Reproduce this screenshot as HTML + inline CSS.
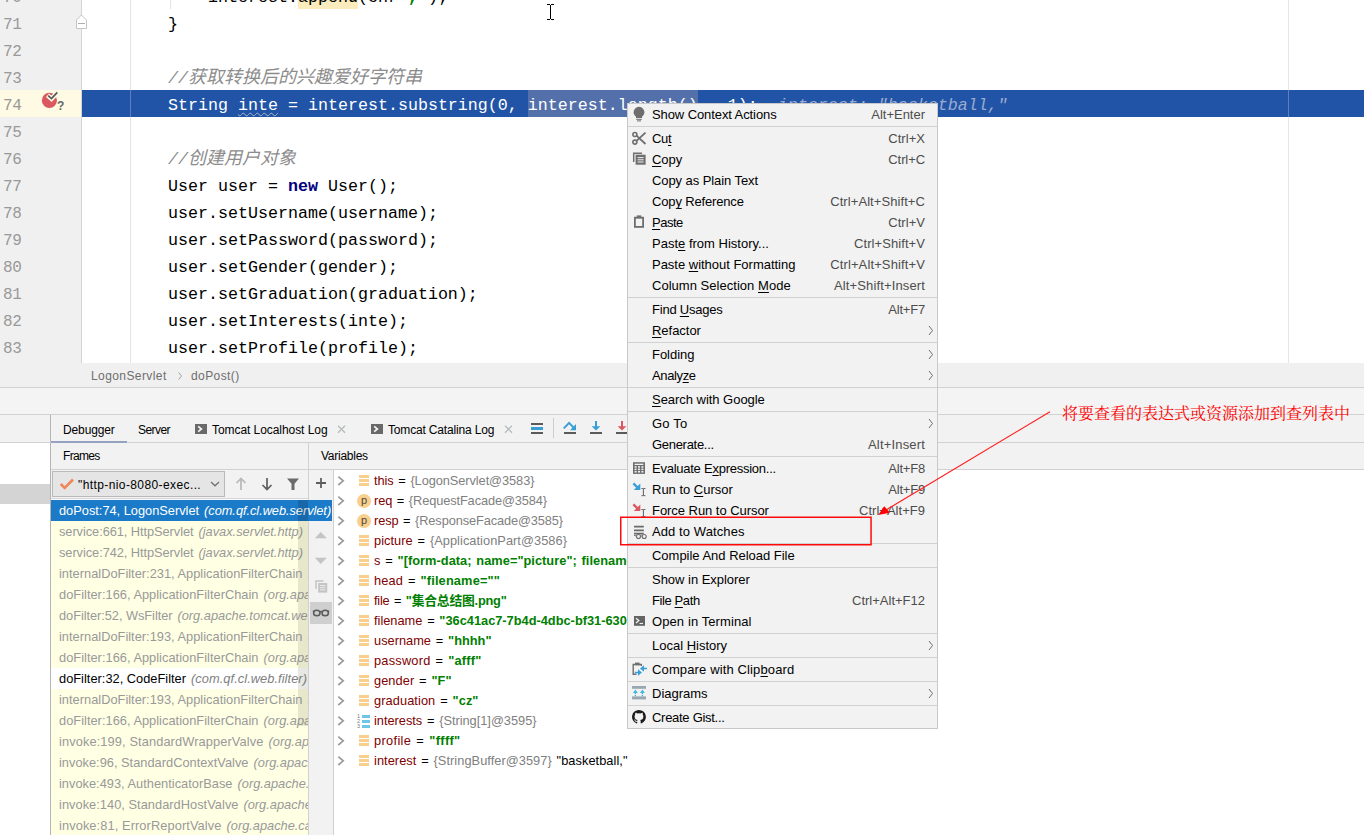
<!DOCTYPE html><html><head><meta charset="utf-8"><title>debug</title><style>
*{box-sizing:border-box;margin:0;padding:0}
html,body{width:1364px;height:835px;overflow:hidden;background:#fff}
body{position:relative;font-family:"Liberation Sans","Noto Sans CJK SC",sans-serif;font-size:12px;color:#000}
.abs{position:absolute}
.mono{font-family:"Liberation Mono","Noto Sans CJK SC",monospace;font-size:16.664px;white-space:pre}
#editor{position:absolute;left:0;top:0;width:1364px;height:363px;background:#fff;overflow:hidden}
#gutter{position:absolute;left:0;top:0;width:82px;height:363px;background:#f0f0f0;border-right:1px solid #d3d3d3}
.ln{position:absolute;left:3px;height:27px;line-height:27px;color:#999;padding-top:3px;font-size:16px !important;letter-spacing:-.45px}
.cl{position:absolute;left:168px;height:27px;line-height:27px;color:#000;padding-top:2px}
.cm{color:#8c8c8c;font-style:italic}
.cm .cj{line-height:0;font-size:18px;font-family:"Liberation Mono","Noto Sans CJK SC",monospace}
.kw{color:#000080;font-weight:bold}
.vline{position:absolute;width:1px}
.hline{position:absolute;height:1px}
.ui{position:absolute;white-space:nowrap;line-height:16px;height:16px}
/* menu */
#menu{position:absolute;left:627px;top:103px;width:311px;height:626px;background:#f2f2f2;border:1px solid #c9c9c9;font-size:13px}
.mi{position:relative;height:21px;line-height:22px;white-space:nowrap}
.mi .t{position:absolute;left:24px;top:0;color:#000}
.mi .k{position:absolute;right:12px;top:0;color:#4d4d4d}
.mi .ar{position:absolute;right:3px;top:5px}
.mi svg.ic{position:absolute;left:4px;top:2px}
.ms{height:3px;padding-top:1px}
.ms i{display:block;height:1px;background:#d1d1d1}
u{text-decoration:underline;text-underline-offset:1.5px;text-decoration-thickness:1px}
/* frames */
.fr{font-size:12.8px;position:absolute;left:51px;width:257px;height:21px;line-height:20px;padding-top:1px;white-space:nowrap;overflow:hidden;padding-left:8px;color:#999;background:#ffffe4}
.fr i{color:#999}
.vr{font-size:12.8px;word-spacing:1.2px;position:absolute;left:374px;height:20px;line-height:20px;white-space:nowrap}
.vn{color:#800000}
.vg{color:#808080}
.vs{color:#008000;font-weight:bold}
</style></head><body>
<div id="editor">
<div id="gutter"></div>
<div class="abs" style="left:0;top:90px;width:81px;height:27px;background:#fffae3"></div>
<div class="abs" style="left:82px;top:90px;width:1282px;height:27px;background:#2154a6"></div>
<div class="abs" style="left:528px;top:90px;width:170px;height:27px;background:#5470aa"></div>
<div class="vline" style="left:130px;top:0;height:363px;background:#e4e4e4"></div>
<div class="vline" style="left:130px;top:90px;height:27px;background:#5f7fbc"></div>
<div class="vline" style="left:170px;top:0;height:9px;background:#e4e4e4"></div>
<div class="vline" style="left:1288px;top:0;height:363px;background:#e6e6e6"></div>
<div class="vline" style="left:1288px;top:90px;height:27px;background:#5f7fbc"></div>
<div class="abs" style="left:298px;top:-18px;width:60px;height:26.500px;background:#fbecbe"></div>
<div class="ln mono" style="top:-18px">70</div>
<div class="cl mono" style="top:-18px">    interest.append(chr<span style="color:#008000;font-weight:bold">","</span>);</div>
<div class="ln mono" style="top:9px">71</div>
<div class="cl mono" style="top:9px">}</div>
<div class="ln mono" style="top:36px">72</div>
<div class="ln mono" style="top:63px">73</div>
<div class="cl mono" style="top:63px"><span class="cm">//<span class="cj">获取转换后的兴趣爱好字符串</span></span></div>
<div class="ln mono" style="top:90px">74</div>
<div class="cl mono" style="top:90px"><span style="color:#fff">String <span style="text-decoration:underline wavy #a9b7c6 1px;text-underline-offset:1.500px">inte</span> = interest.substring(0, interest.length() - 1);</span><span style="color:#9aabd0;font-style:italic">  interest: "basketball,"</span></div>
<div class="ln mono" style="top:117px">75</div>
<div class="ln mono" style="top:144px">76</div>
<div class="cl mono" style="top:144px"><span class="cm">//<span class="cj">创建用户对象</span></span></div>
<div class="ln mono" style="top:171px">77</div>
<div class="cl mono" style="top:171px">User user = <span class="kw">new</span> User();</div>
<div class="ln mono" style="top:198px">78</div>
<div class="cl mono" style="top:198px">user.setUsername(username);</div>
<div class="ln mono" style="top:225px">79</div>
<div class="cl mono" style="top:225px">user.setPassword(password);</div>
<div class="ln mono" style="top:252px">80</div>
<div class="cl mono" style="top:252px">user.setGender(gender);</div>
<div class="ln mono" style="top:279px">81</div>
<div class="cl mono" style="top:279px">user.setGraduation(graduation);</div>
<div class="ln mono" style="top:306px">82</div>
<div class="cl mono" style="top:306px">user.setInterests(inte);</div>
<div class="ln mono" style="top:333px">83</div>
<div class="cl mono" style="top:333px">user.setProfile(profile);</div>
<svg class="abs" style="left:75px;top:14px" width="13" height="16" viewBox="0 0 13 16"><path d="M1.5 14.5V6L6.5 1l5 5v8.5z" fill="#fff" stroke="#c4c4c4"/><path d="M3 9.500h7" stroke="#b0b0b0"/></svg>
<svg class="abs" style="left:40px;top:90px" width="26" height="24" viewBox="0 0 26 24"><circle cx="9.4" cy="10.4" r="7.6" fill="#db5860"/><path d="M7.5 5.2l4 3.6 6.2-6.6" fill="none" stroke="#fffae3" stroke-width="4.6"/><path d="M8.2 5.6l3.3 3 5.8-6.2" fill="none" stroke="#55585e" stroke-width="1.7"/><text x="16.900" y="20.300" font-family="Liberation Sans" font-weight="bold" font-size="12" fill="#666">?</text></svg>
<svg class="abs" style="left:546px;top:3px" width="10" height="18" viewBox="546 3 10 18" shape-rendering="crispEdges"><path d="M547 4h3v1h-3zM551 4h3v1h-3zM550 5h1v14h-1zM547 19h3v1h-3zM551 19h3v1h-3z" fill="#000"/></svg>
</div>
<div class="abs" style="left:0;top:363px;width:1364px;height:25px;background:#f0f0f0"></div><div class="abs" style="left:0;top:388px;width:1364px;height:27px;background:#f4f4f4"></div>
<div class="hline" style="left:0;top:387px;width:1364px;background:#d1d1d1"></div>
<div class="hline" style="left:0;top:414px;width:1364px;background:#d1d1d1"></div>
<div class="ui" style="left:91px;top:368px;color:#6e6e6e"><span style="letter-spacing:0.415px">LogonServlet</span></div>
<svg class="abs" style="left:177px;top:371px" width="6" height="10" viewBox="0 0 6 10"><path d="M1.5 1.5l3 3.500-3 3.500" fill="none" stroke="#a0a0a0" stroke-width="1"/></svg>
<div class="ui" style="left:191px;top:368px;color:#6e6e6e"><span style="letter-spacing:0.418px">doPost()</span></div>
<div class="abs" style="left:0;top:415px;width:1364px;height:55px;background:#f2f2f2"></div>
<div class="abs" style="left:0;top:442px;width:50px;height:393px;background:#fff"></div>
<div class="abs" style="left:0;top:484px;width:50px;height:20px;background:#d4d4d4"></div>
<div class="vline" style="left:50px;top:415px;height:420px;background:#b4b4b4"></div>
<div class="hline" style="left:0;top:442px;width:1364px;background:#d1d1d1"></div>
<div class="hline" style="left:51px;top:469px;width:1313px;background:#d1d1d1"></div>
<div class="ui" style="left:63px;top:421.600px"><span style="letter-spacing:-0.127px">Debugger</span></div>
<div class="abs" style="left:51px;top:440.500px;width:76px;height:2.500px;background:#95a3c0"></div>
<div class="ui" style="left:138px;top:421.600px"><span style="letter-spacing:-0.574px">Server</span></div>
<svg class="abs" style="left:195px;top:424px" width="12" height="10" viewBox="0 0 12 10"><rect width="12" height="10" fill="#696969"/><path d="M3.200 2.300L6.400 5 3.200 7.700" fill="none" stroke="#f5f5f5" stroke-width="1.700"/></svg>
<div class="ui" style="left:212px;top:421.600px"><span style="letter-spacing:-0.062px">Tomcat Localhost Log</span></div>
<svg class="abs" style="left:337px;top:425px" width="9" height="9" viewBox="0 0 9 9"><path d="M1 .700l7 7M8 .700l-7 7" stroke="#b4babc" stroke-width="1.250"/></svg>
<svg class="abs" style="left:371px;top:424px" width="12" height="10" viewBox="0 0 12 10"><rect width="12" height="10" fill="#696969"/><path d="M3.200 2.300L6.400 5 3.200 7.700" fill="none" stroke="#f5f5f5" stroke-width="1.700"/></svg>
<div class="ui" style="left:388px;top:421.600px"><span style="letter-spacing:-0.169px">Tomcat Catalina Log</span></div>
<svg class="abs" style="left:504px;top:425px" width="9" height="9" viewBox="0 0 9 9"><path d="M1 .700l7 7M8 .700l-7 7" stroke="#b4babc" stroke-width="1.250"/></svg>
<svg class="abs" style="left:531px;top:423px" width="12" height="11" viewBox="0 0 12 11" shape-rendering="crispEdges"><path d="M0 0h12v2H0zM0 9h12v2H0z" fill="#5a5a5a"/><path d="M0 4h12v3H0z" fill="#389fd6"/></svg>
<div class="vline" style="left:553px;top:418px;height:20px;background:#cdcdcd"></div>
<svg class="abs" style="left:562px;top:421px" width="16" height="16" viewBox="0 0 16 16"><path d="M1.800 7.400L7.100 1.900l4.500 4.700" fill="none" stroke="#389fd6" stroke-width="2"/><path d="M14 3v6.200H8z" fill="#389fd6"/><path d="M2 11h12v2H2z" fill="#5a5a5a" shape-rendering="crispEdges"/></svg>
<svg class="abs" style="left:588px;top:421px" width="16" height="16" viewBox="0 0 16 16"><path d="M8 0v6" stroke="#389fd6" stroke-width="2"/><path d="M3.600 5.200h8.800L8 9.500z" fill="#389fd6"/><path d="M2 11h12v2H2z" fill="#5a5a5a" shape-rendering="crispEdges"/></svg>
<svg class="abs" style="left:614px;top:421px" width="16" height="16" viewBox="0 0 16 16"><path d="M8 0v6" stroke="#db5860" stroke-width="2"/><path d="M3.600 5.200h8.800L8 9.500z" fill="#db5860"/><path d="M2 11h12v2H2z" fill="#5a5a5a" shape-rendering="crispEdges"/></svg>
<div class="ui" style="left:63px;top:448px"><span style="letter-spacing:-0.662px">Frames</span></div>
<div class="ui" style="left:321px;top:448px"><span style="letter-spacing:-0.260px">Variables</span></div>
<div class="vline" style="left:308px;top:443px;height:392px;background:#d1d1d1"></div>
<div class="abs" style="left:51px;top:470px;width:257px;height:30px;background:#f2f2f2"></div>
<div class="hline" style="left:51px;top:498px;width:257px;background:#d6d6d6"></div><div class="hline" style="left:51px;top:499px;width:257px;background:#fafafa"></div>
<div class="abs" style="left:52px;top:471px;width:173px;height:26px;background:#e5e5e5;border:1px solid #b9b9b9"></div>
<svg class="abs" style="left:59px;top:477px" width="16" height="14" viewBox="0 0 16 14"><path d="M1.700 7l4 4L14 2.500" fill="none" stroke="#f0875a" stroke-width="2.600"/></svg>
<div class="ui" style="left:78px;top:477px"><span style="letter-spacing:0.399px">"http-nio-8080-exec...</span></div>
<svg class="abs" style="left:209px;top:480px" width="12" height="8" viewBox="0 0 12 8"><path d="M2 2L6 5.800 10 2" fill="none" stroke="#6e6e6e" stroke-width="1.200"/></svg>
<svg class="abs" style="left:234px;top:476px" width="14" height="16" viewBox="0 0 14 16"><path d="M7 14V2.500M2.500 7L7 2.500 11.500 7" fill="none" stroke="#b8b8b8" stroke-width="1.700"/></svg>
<svg class="abs" style="left:260px;top:476px" width="14" height="16" viewBox="0 0 14 16"><path d="M7 2v11.300M2.500 9L7 13.500 11.500 9" fill="none" stroke="#606060" stroke-width="1.700"/></svg>
<svg class="abs" style="left:286px;top:477px" width="14" height="14" viewBox="0 0 14 14"><path d="M1 1.500h12L8.500 6.800V13h-3V6.800z" fill="#6a6a6a"/></svg>
<div class="fr" style="top:500px;width:281px;background:#1b7bc8;color:#fff;z-index:3"><span style="letter-spacing:-0.002px">doPost:74, LogonServlet</span><i style="color:#fff;margin-left:5px"><span style="letter-spacing:-0.044px">(com.qf.cl.web.servlet)</span></i></div>
<div class="fr" style="top:521px;"><span style="letter-spacing:-0.057px">service:661, HttpServlet</span><i style="margin-left:5px"><span style="letter-spacing:-0.002px">(javax.servlet.http)</span></i></div>
<div class="fr" style="top:542px;"><span style="letter-spacing:-0.057px">service:742, HttpServlet</span><i style="margin-left:5px"><span style="letter-spacing:-0.002px">(javax.servlet.http)</span></i></div>
<div class="fr" style="top:563px;"><span style="letter-spacing:0.021px">internalDoFilter:231, ApplicationFilterChain</span><i style="margin-left:5px"><span style="letter-spacing:0px">(org.apache.catalina.core)</span></i></div>
<div class="fr" style="top:584px;"><span style="letter-spacing:0.029px">doFilter:166, ApplicationFilterChain</span><i style="margin-left:5px"><span style="letter-spacing:0px">(org.apache.catalina.core)</span></i></div>
<div class="fr" style="top:605px;"><span style="letter-spacing:-0.048px">doFilter:52, WsFilter</span><i style="margin-left:5px"><span style="letter-spacing:0px">(org.apache.tomcat.websocket.server)</span></i></div>
<div class="fr" style="top:626px;"><span style="letter-spacing:0.021px">internalDoFilter:193, ApplicationFilterChain</span><i style="margin-left:5px"><span style="letter-spacing:0px">(org.apache.catalina.core)</span></i></div>
<div class="fr" style="top:647px;"><span style="letter-spacing:0.029px">doFilter:166, ApplicationFilterChain</span><i style="margin-left:5px"><span style="letter-spacing:0px">(org.apache.catalina.core)</span></i></div>
<div class="fr" style="top:668px;background:#fff;color:#000"><span style="letter-spacing:0.017px">doFilter:32, CodeFilter</span><i style="color:#808080;margin-left:5px"><span style="letter-spacing:0.068px">(com.qf.cl.web.filter)</span></i></div>
<div class="fr" style="top:689px;"><span style="letter-spacing:0.021px">internalDoFilter:193, ApplicationFilterChain</span><i style="margin-left:5px"><span style="letter-spacing:0px">(org.apache.catalina.core)</span></i></div>
<div class="fr" style="top:710px;"><span style="letter-spacing:0.029px">doFilter:166, ApplicationFilterChain</span><i style="margin-left:5px"><span style="letter-spacing:0px">(org.apache.catalina.core)</span></i></div>
<div class="fr" style="top:731px;"><span style="letter-spacing:0.114px">invoke:199, StandardWrapperValve</span><i style="margin-left:5px"><span style="letter-spacing:0px">(org.apache.catalina.core)</span></i></div>
<div class="fr" style="top:752px;"><span style="letter-spacing:0.016px">invoke:96, StandardContextValve</span><i style="margin-left:5px"><span style="letter-spacing:0px">(org.apache.catalina.core)</span></i></div>
<div class="fr" style="top:773px;"><span style="letter-spacing:0.021px">invoke:493, AuthenticatorBase</span><i style="margin-left:5px"><span style="letter-spacing:0px">(org.apache.catalina.authenticator)</span></i></div>
<div class="fr" style="top:794px;"><span style="letter-spacing:0.040px">invoke:140, StandardHostValve</span><i style="margin-left:5px"><span style="letter-spacing:0px">(org.apache.catalina.core)</span></i></div>
<div class="fr" style="top:815px;"><span style="letter-spacing:0.100px">invoke:81, ErrorReportValve</span><i style="margin-left:5px"><span style="letter-spacing:0px">(org.apache.catalina.valves)</span></i></div>
<div class="abs" style="left:298px;top:521px;width:10px;height:205px;background:rgba(110,110,90,.17);z-index:4"></div>
<div class="abs" style="left:298px;top:500px;width:10px;height:21px;background:rgba(0,0,0,.15);z-index:4"></div>
<div class="abs" style="left:309px;top:470px;width:24px;height:365px;background:#f2f2f2"></div>
<div class="vline" style="left:333px;top:470px;height:365px;background:#d1d1d1"></div>
<svg class="abs" style="left:314px;top:476px" width="14" height="14" viewBox="0 0 14 14"><path d="M7 2v10M2 7h10" stroke="#5e5e5e" stroke-width="1.800"/></svg>
<svg class="abs" style="left:314px;top:531px" width="14" height="8" viewBox="0 0 14 8"><path d="M.800 7.200L6.800 1l6 6.200z" fill="#c4c4c4"/></svg>
<svg class="abs" style="left:314px;top:557px" width="14" height="8" viewBox="0 0 14 8"><path d="M.800 .800L6.800 7l6-6.200z" fill="#c4c4c4"/></svg>
<svg class="abs" style="left:314px;top:579px" width="14" height="14" viewBox="0 0 14 14"><path d="M2 10V2h7.500" fill="none" stroke="#c4c4c4" stroke-width="1.500"/><rect x="4.200" y="4" width="9" height="9.600" fill="#c4c4c4"/><path d="M6 6.500h5.400M6 8.700h5.400M6 10.900h5.400" stroke="#f2f2f2" stroke-width=".9"/></svg>
<div class="abs" style="left:310px;top:602px;width:22px;height:22px;background:#cfcfcf"></div>
<svg class="abs" style="left:312px;top:605.300px" width="18" height="14" viewBox="0 0 18 14"><ellipse cx="4.800" cy="8" rx="3.200" ry="2.800" fill="none" stroke="#5a5a5a" stroke-width="1.500"/><ellipse cx="13.200" cy="8" rx="3.200" ry="2.800" fill="none" stroke="#5a5a5a" stroke-width="1.500"/><path d="M7.500 7q1.500-1 3 0M1.500 7V5.500M16.500 7V5.500" fill="none" stroke="#5a5a5a" stroke-width="1.300"/></svg>
<svg class="abs" style="left:337px;top:475px" width="8" height="12" viewBox="0 0 8 12"><path d="M1.300 1.700L6.200 5.800 1.300 10" fill="none" stroke="#9b9b9b" stroke-width="1.700"/></svg>
<svg class="abs" style="left:359px;top:475px" width="10" height="11" viewBox="0 0 10 11" shape-rendering="crispEdges"><path d="M0 0h10v3H0zM0 4h10v3H0zM0 8h10v3H0z" fill="#f8cf8c"/></svg>
<div class="vr" style="top:471px"><span style="letter-spacing:-0.074px"><span class="vn">this</span> = <span class="vg">{LogonServlet@3583}</span></span></div>
<svg class="abs" style="left:337px;top:495px" width="8" height="12" viewBox="0 0 8 12"><path d="M1.300 1.700L6.200 5.800 1.300 10" fill="none" stroke="#9b9b9b" stroke-width="1.700"/></svg>
<svg class="abs" style="left:357px;top:494px" width="14" height="14" viewBox="0 0 14 14"><circle cx="7" cy="7" r="7" fill="#f8cf8c"/><text x="7" y="10" text-anchor="middle" font-family="Liberation Sans" font-size="11" fill="#50483a">p</text></svg>
<div class="vr" style="top:491px"><span style="letter-spacing:-0.109px"><span class="vn">req</span> = <span class="vg">{RequestFacade@3584}</span></span></div>
<svg class="abs" style="left:337px;top:515px" width="8" height="12" viewBox="0 0 8 12"><path d="M1.300 1.700L6.200 5.800 1.300 10" fill="none" stroke="#9b9b9b" stroke-width="1.700"/></svg>
<svg class="abs" style="left:357px;top:514px" width="14" height="14" viewBox="0 0 14 14"><circle cx="7" cy="7" r="7" fill="#f8cf8c"/><text x="7" y="10" text-anchor="middle" font-family="Liberation Sans" font-size="11" fill="#50483a">p</text></svg>
<div class="vr" style="top:511px"><span style="letter-spacing:-0.115px"><span class="vn">resp</span> = <span class="vg">{ResponseFacade@3585}</span></span></div>
<svg class="abs" style="left:337px;top:535px" width="8" height="12" viewBox="0 0 8 12"><path d="M1.300 1.700L6.200 5.800 1.300 10" fill="none" stroke="#9b9b9b" stroke-width="1.700"/></svg>
<svg class="abs" style="left:359px;top:535px" width="10" height="11" viewBox="0 0 10 11" shape-rendering="crispEdges"><path d="M0 0h10v3H0zM0 4h10v3H0zM0 8h10v3H0z" fill="#f8cf8c"/></svg>
<div class="vr" style="top:531px"><span style="letter-spacing:0.047px"><span class="vn">picture</span> = <span class="vg">{ApplicationPart@3586}</span></span></div>
<svg class="abs" style="left:337px;top:555px" width="8" height="12" viewBox="0 0 8 12"><path d="M1.300 1.700L6.200 5.800 1.300 10" fill="none" stroke="#9b9b9b" stroke-width="1.700"/></svg>
<svg class="abs" style="left:359px;top:555px" width="10" height="11" viewBox="0 0 10 11" shape-rendering="crispEdges"><path d="M0 0h10v3H0zM0 4h10v3H0zM0 8h10v3H0z" fill="#f8cf8c"/></svg>
<div class="vr" style="top:551px"><span style="letter-spacing:0.033px"><span class="vn">s</span> = <span class="vs">"[form-data; name="picture"; filename="集合总结图.png"]"</span></span></div>
<svg class="abs" style="left:337px;top:575px" width="8" height="12" viewBox="0 0 8 12"><path d="M1.300 1.700L6.200 5.800 1.300 10" fill="none" stroke="#9b9b9b" stroke-width="1.700"/></svg>
<svg class="abs" style="left:359px;top:575px" width="10" height="11" viewBox="0 0 10 11" shape-rendering="crispEdges"><path d="M0 0h10v3H0zM0 4h10v3H0zM0 8h10v3H0z" fill="#f8cf8c"/></svg>
<div class="vr" style="top:571px"><span style="letter-spacing:0.155px"><span class="vn">head</span> = <span class="vs">"filename=""</span></span></div>
<svg class="abs" style="left:337px;top:595px" width="8" height="12" viewBox="0 0 8 12"><path d="M1.300 1.700L6.200 5.800 1.300 10" fill="none" stroke="#9b9b9b" stroke-width="1.700"/></svg>
<svg class="abs" style="left:359px;top:595px" width="10" height="11" viewBox="0 0 10 11" shape-rendering="crispEdges"><path d="M0 0h10v3H0zM0 4h10v3H0zM0 8h10v3H0z" fill="#f8cf8c"/></svg>
<div class="vr" style="top:591px"><span style="letter-spacing:-0.220px"><span class="vn">file</span> = <span class="vs">"集合总结图.png"</span></span></div>
<svg class="abs" style="left:337px;top:615px" width="8" height="12" viewBox="0 0 8 12"><path d="M1.300 1.700L6.200 5.800 1.300 10" fill="none" stroke="#9b9b9b" stroke-width="1.700"/></svg>
<svg class="abs" style="left:359px;top:615px" width="10" height="11" viewBox="0 0 10 11" shape-rendering="crispEdges"><path d="M0 0h10v3H0zM0 4h10v3H0zM0 8h10v3H0z" fill="#f8cf8c"/></svg>
<div class="vr" style="top:611px"><span style="letter-spacing:-0.000px"><span class="vn">filename</span> = <span class="vs">"36c41ac7-7b4d-4dbc-bf31-6301e2a5c7d1.png"</span></span></div>
<svg class="abs" style="left:337px;top:635px" width="8" height="12" viewBox="0 0 8 12"><path d="M1.300 1.700L6.200 5.800 1.300 10" fill="none" stroke="#9b9b9b" stroke-width="1.700"/></svg>
<svg class="abs" style="left:359px;top:635px" width="10" height="11" viewBox="0 0 10 11" shape-rendering="crispEdges"><path d="M0 0h10v3H0zM0 4h10v3H0zM0 8h10v3H0z" fill="#f8cf8c"/></svg>
<div class="vr" style="top:631px"><span style="letter-spacing:0.012px"><span class="vn">username</span> = <span class="vs">"hhhh"</span></span></div>
<svg class="abs" style="left:337px;top:655px" width="8" height="12" viewBox="0 0 8 12"><path d="M1.300 1.700L6.200 5.800 1.300 10" fill="none" stroke="#9b9b9b" stroke-width="1.700"/></svg>
<svg class="abs" style="left:359px;top:655px" width="10" height="11" viewBox="0 0 10 11" shape-rendering="crispEdges"><path d="M0 0h10v3H0zM0 4h10v3H0zM0 8h10v3H0z" fill="#f8cf8c"/></svg>
<div class="vr" style="top:651px"><span style="letter-spacing:0.217px"><span class="vn">password</span> = <span class="vs">"afff"</span></span></div>
<svg class="abs" style="left:337px;top:675px" width="8" height="12" viewBox="0 0 8 12"><path d="M1.300 1.700L6.200 5.800 1.300 10" fill="none" stroke="#9b9b9b" stroke-width="1.700"/></svg>
<svg class="abs" style="left:359px;top:675px" width="10" height="11" viewBox="0 0 10 11" shape-rendering="crispEdges"><path d="M0 0h10v3H0zM0 4h10v3H0zM0 8h10v3H0z" fill="#f8cf8c"/></svg>
<div class="vr" style="top:671px"><span style="letter-spacing:0.059px"><span class="vn">gender</span> = <span class="vs">"F"</span></span></div>
<svg class="abs" style="left:337px;top:695px" width="8" height="12" viewBox="0 0 8 12"><path d="M1.300 1.700L6.200 5.800 1.300 10" fill="none" stroke="#9b9b9b" stroke-width="1.700"/></svg>
<svg class="abs" style="left:359px;top:695px" width="10" height="11" viewBox="0 0 10 11" shape-rendering="crispEdges"><path d="M0 0h10v3H0zM0 4h10v3H0zM0 8h10v3H0z" fill="#f8cf8c"/></svg>
<div class="vr" style="top:691px"><span style="letter-spacing:0.081px"><span class="vn">graduation</span> = <span class="vs">"cz"</span></span></div>
<svg class="abs" style="left:337px;top:715px" width="8" height="12" viewBox="0 0 8 12"><path d="M1.300 1.700L6.200 5.800 1.300 10" fill="none" stroke="#9b9b9b" stroke-width="1.700"/></svg>
<svg class="abs" style="left:356px;top:714px" width="15" height="15" viewBox="0 0 15 15"><path d="M6 1h8v3H6zM6 6h8v3H6zM6 11h8v3H6z" fill="#6ec6e6" shape-rendering="crispEdges"/><g font-family="Liberation Sans" font-size="5.500" fill="#777"><text x="1" y="4.300">1</text><text x="1" y="9.300">2</text><text x="1" y="14.300">3</text></g></svg>
<div class="vr" style="top:711px"><span style="letter-spacing:-0.019px"><span class="vn">interests</span> = <span class="vg">{String[1]@3595}</span></span></div>
<svg class="abs" style="left:337px;top:735px" width="8" height="12" viewBox="0 0 8 12"><path d="M1.300 1.700L6.200 5.800 1.300 10" fill="none" stroke="#9b9b9b" stroke-width="1.700"/></svg>
<svg class="abs" style="left:359px;top:735px" width="10" height="11" viewBox="0 0 10 11" shape-rendering="crispEdges"><path d="M0 0h10v3H0zM0 4h10v3H0zM0 8h10v3H0z" fill="#f8cf8c"/></svg>
<div class="vr" style="top:731px"><span style="letter-spacing:0.342px"><span class="vn">profile</span> = <span class="vs">"ffff"</span></span></div>
<svg class="abs" style="left:337px;top:755px" width="8" height="12" viewBox="0 0 8 12"><path d="M1.300 1.700L6.200 5.800 1.300 10" fill="none" stroke="#9b9b9b" stroke-width="1.700"/></svg>
<svg class="abs" style="left:359px;top:755px" width="10" height="11" viewBox="0 0 10 11" shape-rendering="crispEdges"><path d="M0 0h10v3H0zM0 4h10v3H0zM0 8h10v3H0z" fill="#f8cf8c"/></svg>
<div class="vr" style="top:751px"><span style="letter-spacing:0.049px"><span class="vn">interest</span> = <span class="vg">{StringBuffer@3597}</span> "basketball,"</span></div>
<div id="menu">
<div class="mi"><svg class="ic" width="16" height="16" viewBox="0 0 16 16"><path d="M4 12V10.700A5.400 5.400 0 1 1 10 10.700V12z" fill="#6e6e6e"/><path d="M4.200 13.300h5.600M5 14.900h4" stroke="#6e6e6e" stroke-width="1"/></svg><span class="t"><span style="letter-spacing:-0.093px">Show Context Actions</span></span><span class="k"><span style="letter-spacing:-0.016px">Alt+Enter</span></span></div>
<div class="ms"><i></i></div>
<div class="mi"><svg class="ic" width="16" height="16" viewBox="0 0 16 16"><circle cx="2.900" cy="4.500" r="2" fill="none" stroke="#6e6e6e" stroke-width="1.600"/><circle cx="2.900" cy="12.100" r="2" fill="none" stroke="#6e6e6e" stroke-width="1.600"/><path d="M4.500 5.700L13.500 14M4.500 10.900L13.500 2.600" stroke="#6e6e6e" stroke-width="1.800"/></svg><span class="t"><span style="letter-spacing:-0.317px">Cu<u>t</u></span></span><span class="k"><span style="letter-spacing:0.036px">Ctrl+X</span></span></div>
<div class="mi"><svg class="ic" width="16" height="16" viewBox="0 0 16 16"><path d="M1.700 11V2.200H10" fill="none" stroke="#6e6e6e" stroke-width="1.500"/><rect x="3.600" y="3.700" width="10" height="10" fill="#6e6e6e"/><path d="M5.600 6.600h6M5.600 8.800h6M5.600 11h6" stroke="#f2f2f2" stroke-width="1"/></svg><span class="t"><span style="letter-spacing:-0.065px"><u>C</u>opy</span></span><span class="k"><span style="letter-spacing:-0.084px">Ctrl+C</span></span></div>
<div class="mi"><span class="t"><span style="letter-spacing:-0.080px">Copy as Plain Text</span></span></div>
<div class="mi"><span class="t"><span style="letter-spacing:-0.161px">Cop<u>y</u> Reference</span></span><span class="k"><span style="letter-spacing:0.076px">Ctrl+Alt+Shift+C</span></span></div>
<div class="mi"><svg class="ic" width="16" height="16" viewBox="0 0 16 16"><rect x="2.900" y="3.700" width="8.200" height="9.200" fill="none" stroke="#6e6e6e" stroke-width="1.800"/><rect x="4.700" y="1.400" width="4.600" height="2.800" fill="#6e6e6e"/></svg><span class="t"><span style="letter-spacing:-0.510px"><u>P</u>aste</span></span><span class="k"><span style="letter-spacing:0.036px">Ctrl+V</span></span></div>
<div class="mi"><span class="t"><span style="letter-spacing:0.005px">Past<u>e</u> from History...</span></span><span class="k"><span style="letter-spacing:0.076px">Ctrl+Shift+V</span></span></div>
<div class="mi"><span class="t"><span style="letter-spacing:-0.017px">Paste <u>w</u>ithout Formatting</span></span><span class="k"><span style="letter-spacing:0.121px">Ctrl+Alt+Shift+V</span></span></div>
<div class="mi"><span class="t"><span style="letter-spacing:0.031px">Column Selection <u>M</u>ode</span></span><span class="k"><span style="letter-spacing:0.132px">Alt+Shift+Insert</span></span></div>
<div class="ms"><i></i></div>
<div class="mi"><span class="t"><span style="letter-spacing:-0.218px">Find <u>U</u>sages</span></span><span class="k"><span style="letter-spacing:-0.206px">Alt+F7</span></span></div>
<div class="mi"><span class="t"><span style="letter-spacing:-0.030px"><u>R</u>efactor</span></span><svg class="ar" width="6" height="11" viewBox="0 0 6 11"><path d="M1 1l3.500 4.500L1 10" fill="none" stroke="#6e6e6e" stroke-width="1"/></svg></div>
<div class="ms"><i></i></div>
<div class="mi"><span class="t"><span style="letter-spacing:-0.034px">Folding</span></span><svg class="ar" width="6" height="11" viewBox="0 0 6 11"><path d="M1 1l3.500 4.500L1 10" fill="none" stroke="#6e6e6e" stroke-width="1"/></svg></div>
<div class="mi"><span class="t"><span style="letter-spacing:-0.381px">Analy<u>z</u>e</span></span><svg class="ar" width="6" height="11" viewBox="0 0 6 11"><path d="M1 1l3.500 4.500L1 10" fill="none" stroke="#6e6e6e" stroke-width="1"/></svg></div>
<div class="ms"><i></i></div>
<div class="mi"><span class="t"><span style="letter-spacing:-0.036px"><u>S</u>earch with Google</span></span></div>
<div class="ms"><i></i></div>
<div class="mi"><span class="t"><span style="letter-spacing:0.189px">Go To</span></span><svg class="ar" width="6" height="11" viewBox="0 0 6 11"><path d="M1 1l3.500 4.500L1 10" fill="none" stroke="#6e6e6e" stroke-width="1"/></svg></div>
<div class="mi"><span class="t"><span style="letter-spacing:-0.295px">Generate...</span></span><span class="k"><span style="letter-spacing:0.172px">Alt+Insert</span></span></div>
<div class="ms"><i></i></div>
<div class="mi"><svg class="ic" width="16" height="16" viewBox="0 0 16 16"><rect x="1" y="2.200" width="12" height="11.700" fill="#6e6e6e"/><g fill="#f2f2f2"><rect x="2.600" y="6.200" width="2" height="1.500"/><rect x="6" y="6.200" width="2" height="1.500"/><rect x="9.400" y="6.200" width="2" height="1.500"/><rect x="2.600" y="8.600" width="2" height="1.500"/><rect x="6" y="8.600" width="2" height="1.500"/><rect x="9.400" y="8.600" width="2" height="1.500"/><rect x="2.600" y="11" width="2" height="1.500"/><rect x="6" y="11" width="2" height="1.500"/><rect x="9.400" y="11" width="2" height="1.500"/><rect x="2.600" y="3.700" width="8.800" height="1.300"/></g></svg><span class="t"><span style="letter-spacing:-0.248px">Evaluate E<u>x</u>pression...</span></span><span class="k"><span style="letter-spacing:-0.206px">Alt+F8</span></span></div>
<div class="mi"><svg class="ic" width="17" height="17" viewBox="0 0 17 17"><path d="M1.400 2.300L6 7" stroke="#389fd6" stroke-width="2.400"/><path d="M8.300 2.600V9.100H1.800z" fill="#389fd6"/><path d="M9.400 7.500h1.300q.7 0 .7.700v5.800q0 .7-.7.700H9.400M13.400 7.500h-1.300q-.7 0-.7.700M13.400 14.700h-1.300q-.7 0-.7-.7" fill="none" stroke="#4d4d4d" stroke-width=".9"/></svg><span class="t"><span style="letter-spacing:-0.011px">Run to <u>C</u>ursor</span></span><span class="k"><span style="letter-spacing:-0.206px">Alt+F9</span></span></div>
<div class="mi"><svg class="ic" width="17" height="17" viewBox="0 0 17 17"><path d="M1.400 2.300L6 7" stroke="#db5860" stroke-width="2.400"/><path d="M8.300 2.600V9.100H1.800z" fill="#db5860"/><path d="M9.400 7.500h1.300q.7 0 .7.700v5.800q0 .7-.7.700H9.400M13.400 7.500h-1.300q-.7 0-.7.700M13.400 14.700h-1.300q-.7 0-.7-.7" fill="none" stroke="#4d4d4d" stroke-width=".9"/></svg><span class="t"><span style="letter-spacing:-0.046px">Force Run to Cursor</span></span><span class="k"><span style="letter-spacing:0.023px">Ctrl+Alt+F9</span></span></div>
<div class="mi"><svg class="ic" width="16" height="17" viewBox="0 0 16 17"><path d="M2 3.700h9.800M2 7.300h9.800M2 10.700h9.800" stroke="#6a6a6a" stroke-width="1.800"/><circle cx="6.500" cy="13.500" r="2" fill="none" stroke="#6e6e6e" stroke-width="1.100"/><circle cx="12.200" cy="13.500" r="2" fill="none" stroke="#6e6e6e" stroke-width="1.100"/><path d="M8.500 13h1.700M2 12.300l2.500.8" stroke="#6e6e6e" fill="none"/></svg><span class="t"><span style="letter-spacing:0.093px">Add to Watches</span></span></div>
<div class="ms"><i></i></div>
<div class="mi"><span class="t"><span style="letter-spacing:-0.016px">Compile And Reload File</span></span></div>
<div class="ms"><i></i></div>
<div class="mi"><span class="t"><span style="letter-spacing:-0.024px">Show in Explorer</span></span></div>
<div class="mi"><span class="t"><span style="letter-spacing:-0.401px">File <u>P</u>ath</span></span><span class="k"><span style="letter-spacing:0.001px">Ctrl+Alt+F12</span></span></div>
<div class="mi"><svg class="ic" width="16" height="16" viewBox="0 0 16 16"><rect x="2" y="3" width="11" height="9.800" fill="#646464"/><path d="M4 5.200L6.800 7.600 4 10" fill="none" stroke="#f2f2f2" stroke-width="1.300"/><path d="M7.500 10.500h3.500" stroke="#f2f2f2" stroke-width="1.100"/></svg><span class="t"><span style="letter-spacing:0.097px">Open in Terminal</span></span></div>
<div class="ms"><i></i></div>
<div class="mi"><span class="t"><span style="letter-spacing:-0.012px">Local <u>H</u>istory</span></span><svg class="ar" width="6" height="11" viewBox="0 0 6 11"><path d="M1 1l3.500 4.500L1 10" fill="none" stroke="#6e6e6e" stroke-width="1"/></svg></div>
<div class="ms"><i></i></div>
<div class="mi"><svg class="ic" width="17" height="17" viewBox="0 0 17 17"><path d="M6.500 3.500H9.300V5M4.500 13.300H1.200V3.500H3.500" fill="none" stroke="#6e6e6e" stroke-width="1.400"/><rect x="3" y="1.600" width="4.600" height="2.800" fill="#6e6e6e"/><path d="M2.800 11.500h3.500M11.500 7.500h3.500" stroke="#389fd6" stroke-width="1.700"/><path d="M6 8.300l4 3.200-4 3.200z" fill="#389fd6"/><path d="M12 4.300l-4 3.200 4 3.200z" fill="#389fd6"/></svg><span class="t"><span style="letter-spacing:0.133px">Compare with Clip<u>b</u>oard</span></span></div>
<div class="ms"><i></i></div>
<div class="mi"><svg class="ic" width="16" height="16" viewBox="0 0 16 16"><rect x="0" y="1" width="14" height="2.800" fill="#9aa7b0"/><rect x="0" y="11.400" width="14" height="3" fill="#9aa7b0"/><path d="M3.400 7v4.300M10.400 7v4.300" stroke="#40b6e0" stroke-width="1.300" stroke-dasharray="2.200 .700"/><path d="M1 8l2.400-3.400L5.800 8zM8 8l2.400-3.400L12.800 8z" fill="#40b6e0"/></svg><span class="t"><span style="letter-spacing:-0.003px">Diagrams</span></span><svg class="ar" width="6" height="11" viewBox="0 0 6 11"><path d="M1 1l3.500 4.500L1 10" fill="none" stroke="#6e6e6e" stroke-width="1"/></svg></div>
<div class="ms"><i></i></div>
<div class="mi"><svg class="ic" width="16" height="16" viewBox="0 0 16 16"><path transform="translate(-.4,.3) scale(.92)" fill="#1a1a1a" d="M8 .700a7.500 7.500 0 0 0-2.370 14.620c.37.070.51-.160.510-.360v-1.400c-2.090.450-2.530-.890-2.530-.890-.340-.870-.830-1.100-.830-1.100-.680-.470.050-.460.050-.460.750.050 1.150.770 1.150.770.670 1.150 1.760.820 2.190.620.070-.480.260-.820.470-1-1.670-.190-3.420-.830-3.420-3.710 0-.820.290-1.490.770-2.010-.080-.190-.330-.950.070-1.990 0 0 .630-.200 2.060.770a7.100 7.100 0 0 1 3.760 0c1.430-.970 2.060-.770 2.060-.770.410 1.040.150 1.800.070 1.990.480.520.770 1.190.770 2.010 0 2.890-1.760 3.520-3.430 3.710.270.230.510.690.510 1.390v2.060c0 .200.130.430.510.360A7.500 7.500 0 0 0 8 .700z"/></svg><span class="t"><span style="letter-spacing:-0.284px">Create Gist...</span></span></div>
</div>
<svg class="abs" style="left:618px;top:514px;z-index:20" width="258" height="34" viewBox="618 514 258 34"><rect x="620.750" y="517.250" width="250.300" height="27.500" fill="none" stroke="#ff0a0a" stroke-width="1.500"/></svg>
<svg class="abs" style="left:860px;top:400px;z-index:20" width="200" height="125" viewBox="860 400 200 125"><path d="M1050 411.700L884 511.200" stroke="#ff2020" stroke-width="1.200"/><path d="M878.200 514.900L884.300 506.200L889.900 512.700z" fill="#ff0000"/></svg>
<div class="abs" style="left:1062px;top:402px;height:24px;line-height:24px;font-family:'Liberation Serif','Noto Serif CJK SC',serif;font-size:16px;color:#ff0000;white-space:nowrap;z-index:20">将要查看的表达式或资源添加到查列表中</div>
</body></html>
